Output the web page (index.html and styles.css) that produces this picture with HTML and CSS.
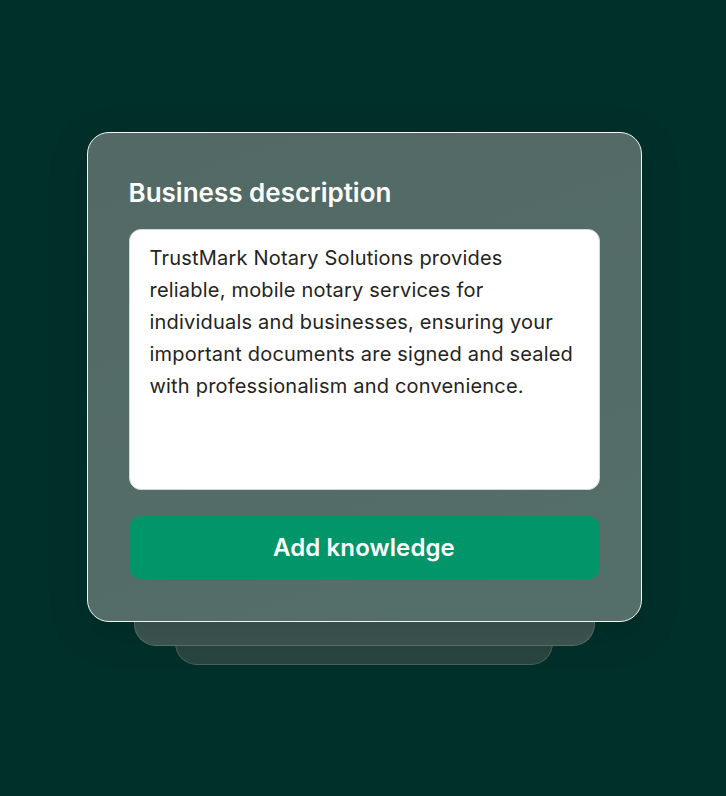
FILE: index.html
```html
<!DOCTYPE html>
<html lang="en">
<head>
<meta charset="utf-8">
<title>Business description</title>
<link rel="stylesheet" href="styles.css">
</head>
<body>
<main class="stage">
  <div class="stack">
    <section class="card">
      <h1 class="title">Business description</h1>
      <div class="textbox">TrustMark Notary Solutions provides reliable, mobile notary services for individuals and businesses, ensuring your important documents are signed and sealed with professionalism and convenience.</div>
      <button class="btn">Add knowledge</button>
    </section>
    <div class="layer layer-1"></div>
    <div class="layer layer-2"></div>
  </div>
</main>
</body>
</html>
```
FILE: styles.css
```css
* { box-sizing: border-box; }
html, body {
  margin: 0;
  padding: 0;
  background: #00302a;
}
body {
  width: 726px;
  height: 796px;
  overflow: hidden;
  font-family: Inter, "Noto Sans", sans-serif;
}
.stage {
  display: flex;
  justify-content: center;
  padding-top: 132px;
  padding-left: 2px;
}
.stack {
  display: flex;
  flex-direction: column;
  align-items: center;
}
.card {
  position: relative;
  z-index: 3;
  width: 555px;
  height: 490px;
  border: 1.5px solid #f2f5f4;
  border-radius: 22px;
  background: linear-gradient(160deg, #526966 0%, #546c68 60%, #546f6a 100%);
  padding: 44px 41px 0 41px;
  display: flex;
  flex-direction: column;
  box-shadow: 0 10px 40px rgba(0,0,0,0.15);
}
.title {
  margin: 0;
  font-size: 26px;
  line-height: 32px;
  font-weight: 600;
  color: #ffffff;
}
.textbox {
  margin-top: 20px;
  height: 261px;
  background: #ffffff;
  border: 1.5px solid #d4d8d6;
  border-radius: 12px;
  padding: 12px 19px 0 20px;
  font-size: 20px;
  letter-spacing: 0.2px;
  line-height: 32px;
  color: #1f2422;
}
.btn {
  margin-top: 26px;
  height: 63px;
  border: none;
  border-radius: 12px;
  background: #03956a;
  color: #ffffff;
  font-family: Inter, "Noto Sans", sans-serif;
  font-size: 24px;
  letter-spacing: 0.1px;
  font-weight: 600;
  cursor: pointer;
}
.layer {
  border-radius: 0 0 22px 22px;
  height: 60px;
}
.layer-1 {
  position: relative;
  z-index: 2;
  width: 461px;
  margin-top: -36px;
  background: #3d5651;
  border: 1px solid #5b716c;
  border-top: none;
}
.layer-2 {
  position: relative;
  z-index: 1;
  width: 378px;
  margin-top: -41px;
  background: #2a4540;
  border: 1px solid #4a605b;
  border-top: none;
}
```
